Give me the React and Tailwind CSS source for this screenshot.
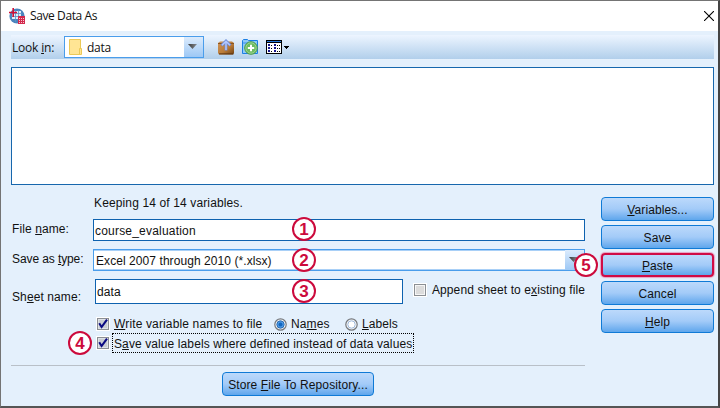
import React from "react";

function Check({ on }) {
  return (
    <svg className="block h-[14px] w-[14px] shrink-0" viewBox="0 0 14 14">
      <rect width="14" height="14" fill="#fff" />
      <rect x="1.5" y="1.5" width="11" height="11" fill={on ? "#c9cdd2" : "#dcdcdc"} stroke="#8b8f94" />
      <rect x="2.5" y="2.5" width="9" height="9" fill="none" stroke={on ? "#dfe3e8" : "#f6f6f6"} />
      {on && <path d="M3.2 6.2 L5.6 10 L11 2.6" fill="none" stroke="#0a0a82" strokeWidth="2.1" />}
    </svg>
  );
}

function Radio({ on }) {
  return (
    <svg className="block h-[13px] w-[13px] shrink-0" viewBox="0 0 13 13">
      <circle cx="6.5" cy="6.5" r="5.7" fill="#f8f8f8" stroke="#74787d" strokeWidth="1.2" />
      <circle cx="6.5" cy="6.5" r="3.7" fill={on ? "#4d9be8" : "#fff"} stroke={on ? "#2c6cb0" : "#9db9dc"} />
      {on && <circle cx="6.5" cy="6.5" r="2" fill="#1267c0" />}
    </svg>
  );
}

function Badge({ n, className }) {
  return (
    <div
      className={
        "absolute z-10 flex h-6 w-6 items-center justify-center rounded-full border-2 border-[#cc0a3c] bg-white text-[17px] leading-none font-bold tracking-normal text-[#cc0a3c] " +
        className
      }
    >
      {n}
    </div>
  );
}

function Button({ children, className = "" }) {
  return (
    <button
      className={
        "flex h-6 shrink-0 items-center justify-center rounded-[4px] border border-[#0f7ad6] bg-linear-to-b from-[#bcd9fb] via-[#a3cbf8] to-[#5ea6ec] pt-[2px] " +
        className
      }
    >
      <span>{children}</span>
    </button>
  );
}

function Arrow() {
  return (
    <svg className="block h-[5px] w-[9px]" viewBox="0 0 9 5">
      <defs>
        <linearGradient id="arrow" x1="0" y1="0" x2="1" y2="0">
          <stop offset="0" stopColor="#3a3a3a" />
          <stop offset="1" stopColor="#858b92" />
        </linearGradient>
      </defs>
      <path d="M0 0H9L4.5 5Z" fill="url(#arrow)" />
    </svg>
  );
}

function AppIcon() {
  return (
    <svg className="block h-4 w-4" viewBox="0 0 16 16">
      <circle cx="8" cy="8" r="7.6" fill="#4a83bd" />
      <path d="M5 3h7v8H3V6h2z" fill="#e3edf7" />
      <path d="M3 5.5h10M2 8.5h12M6.5 2v12M9.5 2v12" stroke="#5c92c8" strokeWidth=".8" />
      <path d="M4.2 0v9M0 4.5h8" stroke="#d01038" strokeWidth="1.6" />
      <rect x="9" y="8" width="7" height="8" fill="#d3294c" />
      <path d="M10 10.5h5M10 12.5h5M10 14.5h5" stroke="#f6c4d0" strokeWidth="1" strokeDasharray="1 1" />
    </svg>
  );
}

function FolderUp() {
  return (
    <svg className="block h-4 w-4" viewBox="0 0 16 16">
      <defs>
        <linearGradient id="box" x1="0" y1="0" x2="1" y2="1">
          <stop offset="0" stopColor="#cf9458" />
          <stop offset=".55" stopColor="#bb7d3a" />
          <stop offset="1" stopColor="#704010" />
        </linearGradient>
      </defs>
      <path d="M0 4L2 2.500H14L16 4V14L15 15.500H1L0 14Z" fill="url(#box)" />
      <path d="M0 4.500H16" stroke="#8a5522" />
      <path d="M1 14.900H15.500" stroke="#5c3510" />
      <path d="M8 11.500V2.500M3.500 6.500L8 2l4.500 4.500" fill="none" stroke="#6f8cd8" strokeWidth="2.8" />
      <path d="M8 11V2.500M4 6.300L8 2.300l4 4" fill="none" stroke="#b4c9ff" strokeWidth="1.4" />
    </svg>
  );
}

function NewFolder() {
  return (
    <svg className="block h-4 w-4" viewBox="0 0 16 16">
      <path d="M.5 14.500V1.500L1.500.5H5.500L6.500 1.500H15.500V14.500Z" fill="#8dc9fa" stroke="#1b7fe4" />
      <path d="M1 4H6.500" stroke="#3d8eeb" />
      <circle cx="9" cy="9" r="6.300" fill="#6dbb60" stroke="#4c9a4b" />
      <circle cx="9" cy="9" r="5.200" fill="none" stroke="#a5d99c" strokeWidth=".8" />
      <path d="M9 5.800v6.400M5.800 9h6.400" stroke="#fff" strokeWidth="2" />
    </svg>
  );
}

function Details() {
  return (
    <svg className="block h-[14px] w-[23px]" viewBox="0 0 23 14" shapeRendering="crispEdges">
      <rect x=".5" y=".5" width="15" height="13" fill="#fff" stroke="#000" />
      <path d="M1 1.500H15" stroke="#2478dc" />
      <path d="M1 2.500H15" stroke="#000" />
      <path d="M2 5h2m4 0h2M2 8h2m4 0h2M2 11h2m4 0h2" stroke="#15158a" strokeWidth="2" />
      <path d="M5 5.500h2m4 0h3M5 8.500h2m4 0h3M5 11.500h2m4 0h3" stroke="#000" strokeDasharray="1 1" />
      <path d="M18 6h5v1h-1v1h-1v1h-1v-1h-1v-1h-1z" />
    </svg>
  );
}

export default function App() {
  return (
    <div className="relative flex h-[408px] w-[720px] flex-col overflow-hidden border-t border-r-2 border-b-2 border-l border-t-[#747474] border-r-[#444] border-b-[#555] border-l-[#747474] bg-[#e4f0fc] font-['Liberation_Sans',sans-serif] text-[12px] leading-[14px] tracking-[0.1px] whitespace-nowrap text-[#111]">
      <header className="flex h-[30px] shrink-0 items-center bg-white pr-[4px] pl-2">
        <AppIcon />
        <span className="ml-[5px] font-['Open_Sans',sans-serif] text-[12px] tracking-[-0.4px]">Save Data As</span>
        <svg className="ml-auto block h-[10px] w-[10px]" viewBox="0 0 10 10">
          <path d="M0 0L10 10M10 0L0 10" stroke="#000" strokeWidth="1.1" />
        </svg>
      </header>

      <div className="mt-1 mr-[4px] ml-[10px] flex h-6 shrink-0 items-center bg-linear-to-b from-[#edf5ff] to-[#b1cfeb]">
        <span className="w-[53px] pt-px pl-px font-['Open_Sans',sans-serif] text-[12px] tracking-[-0.2px]">
          Look <u>i</u>n:
        </span>
        <div className="flex h-[22px] w-[140px] border border-[#4a9deb] bg-white">
          <svg className="mt-[2px] ml-1 block h-4 w-[13px]" viewBox="0 0 13 16">
            <path d="M.5.5H11.500V15.500H.5Z" fill="#ffe594" stroke="#ebc957" />
            <path d="M10.500 9.500h2v6h-2z" fill="#ffe594" stroke="#ebc957" />
          </svg>
          <span className="ml-[5px] pt-[4px] font-['Open_Sans',sans-serif] text-[12px] tracking-[-0.3px]">data</span>
          <div className="ml-auto flex h-[20px] w-[19px] items-center justify-center bg-linear-to-b from-[#dcebfc] to-[#9dc8f5] pr-[2px] pb-[2px]">
            <Arrow />
          </div>
        </div>
        <div className="ml-[14px] flex items-center gap-2">
          <FolderUp />
          <NewFolder />
          <Details />
        </div>
      </div>

      <div className="mt-2 mr-[4px] ml-[10px] h-[118px] shrink-0 border border-[#1767ad] bg-white" />

      <div className="mr-[4px] ml-[10px] flex flex-1">
        <div className="flex w-[574px] flex-col">
          <div className="mt-[11px] ml-[82px] h-[14px] pl-px tracking-[0.13px]">Keeping 14 of 14 variables.</div>
          <div className="relative mt-[9px] flex h-[22px]">
            <label className="w-[82px] pt-[3px] pl-px">
              File <u>n</u>ame:
            </label>
            <div className="flex w-[492px] items-center border border-[#0e62af] bg-white pt-[1px] pl-[1px] tracking-[0.2px]">
              course_evaluation
            </div>
            <Badge n="1" className="top-[-2px] left-[281px]" />
          </div>
          <div className="relative mt-[8px] flex h-[22px]">
            <label className="w-[82px] pt-[3px] pl-px tracking-[-0.1px]">
              Save as <u>t</u>ype:
            </label>
            <div className="flex w-[492px] items-center border border-[#4a9deb] bg-white pl-[2px] shadow-[inset_0_1px_0_#a9d0f7,inset_0_-1px_0_#a9d0f7]">
              <span className="pt-[1px] tracking-[0.07px]">Excel 2007 through 2010 (*.xlsx)</span>
              <div className="ml-auto flex h-[20px] w-[19px] items-center justify-center bg-linear-to-b from-[#dcebfc] to-[#9dc8f5] pr-[2px] pb-[2px]">
                <Arrow />
              </div>
            </div>
            <Badge n="2" className="top-[-1px] left-[281px]" />
            <Badge n="5" className="top-[4px] left-[563px]" />
          </div>
          <div className="relative mt-[8px] flex h-[25px]">
            <label className="w-[84px] pt-[11px] pl-px">
              Sh<u>e</u>et name:
            </label>
            <div className="flex w-[308px] items-center border border-[#0e62af] bg-white pl-[1px]">data</div>
            <div className="ml-[10px] flex h-[22px] items-center gap-[5px]">
              <Check />
              <span>
                Append sheet to e<u>x</u>isting file
              </span>
            </div>
            <Badge n="3" className="top-0 left-[281px]" />
          </div>
          <div className="mt-[13px] ml-[85px] flex h-[14px] items-center">
            <Check on />
            <span className="ml-[4px] w-[160px] tracking-[0.14px]">
              <u>W</u>rite variable names to file
            </span>
            <Radio on />
            <span className="ml-1 w-[54px]">
              Na<u>m</u>es
            </span>
            <Radio />
            <span className="ml-1">
              <u>L</u>abels
            </span>
          </div>
          <div className="relative mt-[2px] ml-[85px] flex h-5 items-center">
            <Check on />
            <span className="ml-[2px] flex h-5 w-[302px] items-center border border-dotted border-black pt-px pl-px">
              <span>
                S<u>a</u>ve value labels where defined instead of data values
              </span>
            </span>
            <Badge n="4" className="top-[-2px] left-[-28px]" />
          </div>
          <div className="mt-[12px] h-px bg-[#b9c0c8]" />
          <Button className="mt-[6px] ml-[211px] w-[152px]">
            Store <u>F</u>ile To Repository...
          </Button>
        </div>

        <div className="mt-[12px] ml-4 flex w-[113px] flex-col gap-1">
          <Button>
            <u>V</u>ariables...
          </Button>
          <Button>Save</Button>
          <Button className="border-2 border-[#d00b45]! shadow-[0_0_1px_1px_#e8a0c0]">
            <u>P</u>aste
          </Button>
          <Button>Cancel</Button>
          <Button>
            <u>H</u>elp
          </Button>
        </div>
      </div>
    </div>
  );
}
